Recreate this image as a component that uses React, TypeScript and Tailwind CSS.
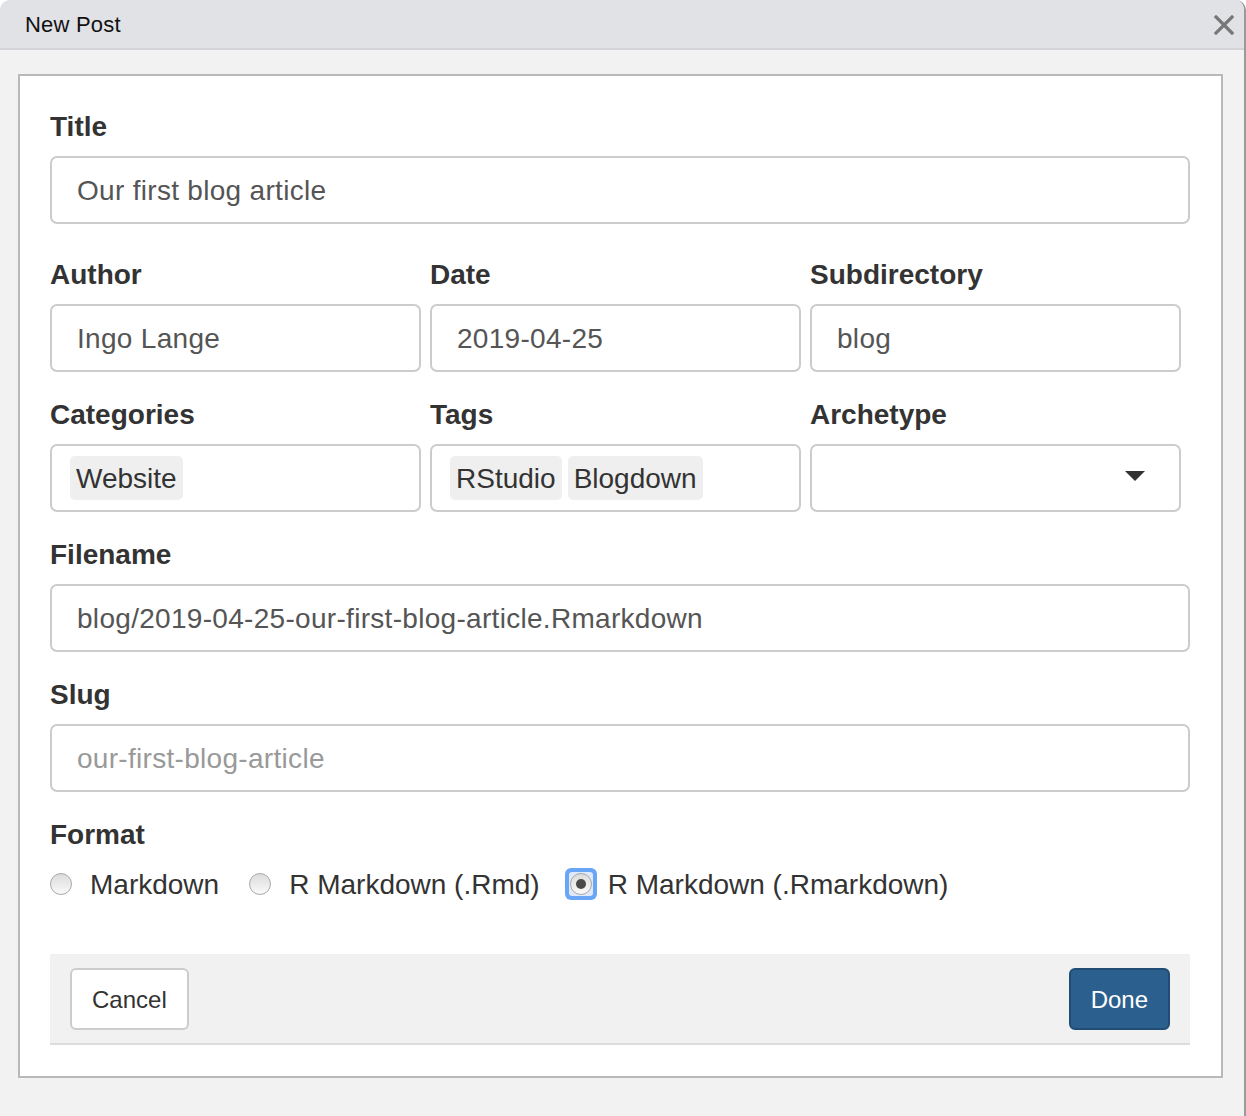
import { ReactNode } from "react";

const font = { fontFamily: '"Liberation Sans", Arial, Helvetica, sans-serif' };

function Label({ children, className = "" }: { children: ReactNode; className?: string }) {
  return (
    <div className={`h-10 leading-[42px] text-[28px] font-bold text-[#333] mb-[10px] ${className}`}>
      {children}
    </div>
  );
}

function TextBox({ value, muted, className = "" }: { value?: string; muted?: boolean; className?: string }) {
  return (
    <div
      className={`h-[68px] flex items-center pt-[2px] px-[25px] border-2 border-[#cccccc] rounded-[7px] bg-white text-[28px] tracking-[0.3px] ${
        muted ? "text-[#999]" : "text-[#555]"
      } ${className}`}
    >
      {value}
    </div>
  );
}

function Chips({ items }: { items: string[] }) {
  return (
    <div className="h-[68px] flex items-center gap-[6px] pl-[18px] border-2 border-[#cccccc] rounded-[7px] bg-white">
      {items.map((t) => (
        <span key={t} className="h-[44px] flex items-center pt-[2px] px-[6px] bg-[#efefef] rounded-[5px] text-[28px] text-[#333]">
          {t}
        </span>
      ))}
    </div>
  );
}

function Radio({ label, checked }: { label: string; checked?: boolean }) {
  const circle = (
    <span className="w-[22px] h-[22px] rounded-full border border-[#a8a8a8] bg-gradient-to-b from-[#dcdcdc] to-[#fafafa] flex items-center justify-center">
      {checked && <span className="w-[10px] h-[10px] rounded-full bg-[#4a4a4a]" />}
    </span>
  );
  return (
    <div className="flex items-center">
      {checked ? (
        <span className="w-[32px] h-[32px] -ml-[5px] mr-[11px] rounded-[6px] bg-[#6aa6f8] flex items-center justify-center">
          <span className="w-[24px] h-[24px] rounded-[3px] bg-[#dfe9f7] flex items-center justify-center">{circle}</span>
        </span>
      ) : (
        <span className="mr-[18px]">{circle}</span>
      )}
      <span className="text-[28px] text-[#333] pt-[2px]">{label}</span>
    </div>
  );
}

export default function App() {
  return (
    <div className="w-[1246px] h-[1116px] bg-white" style={font}>
      <div className="w-[1246px] h-[1116px] rounded-tl-[10px] rounded-tr-[10px] border-r-2 border-[#9a9a9a] bg-[#f1f2f1] overflow-hidden flex flex-col">
        <div className="h-[50px] shrink-0 bg-[#e1e2e6] border-b-2 border-[#d3d4d8] flex items-center justify-between pl-[25px] pr-[10px]">
          <span className="text-[22px] text-[#111] tracking-[0.2px]">New Post</span>
          <svg width="20" height="20" viewBox="0 0 20 20" className="mt-[1px]">
            <path d="M2 2 L18 18 M18 2 L2 18" stroke="#777" strokeWidth="3.2" strokeLinecap="square" />
          </svg>
        </div>
        <div className="pt-[24px] pl-[18px] pr-[21px]">
          <div className="h-[1004px] border-2 border-[#b9b9b9] bg-white pt-[30px] px-[30px]">
            <Label>Title</Label>
            <TextBox value="Our first blog article" className="w-[1140px]" />

            <div className="grid grid-cols-[371px_371px_371px] gap-x-[9px] mt-[30px]">
              <div>
                <Label>Author</Label>
                <TextBox value="Ingo Lange" />
              </div>
              <div>
                <Label>Date</Label>
                <TextBox value="2019-04-25" />
              </div>
              <div>
                <Label>Subdirectory</Label>
                <TextBox value="blog" />
              </div>
            </div>

            <div className="grid grid-cols-[371px_371px_371px] gap-x-[9px] mt-[22px]">
              <div>
                <Label>Categories</Label>
                <Chips items={["Website"]} />
              </div>
              <div>
                <Label>Tags</Label>
                <Chips items={["RStudio", "Blogdown"]} />
              </div>
              <div>
                <Label>Archetype</Label>
                <div className="h-[68px] flex items-center justify-end pr-[34px] border-2 border-[#cccccc] rounded-[7px] bg-white">
                  <svg width="20" height="11" viewBox="0 0 20 11" className="-mt-[4px]">
                    <path d="M0 0 H20 L10 10 Z" fill="#333" />
                  </svg>
                </div>
              </div>
            </div>

            <Label className="mt-[22px]">Filename</Label>
            <TextBox value="blog/2019-04-25-our-first-blog-article.Rmarkdown" className="w-[1140px]" />

            <Label className="mt-[22px]">Slug</Label>
            <TextBox value="our-first-blog-article" muted className="w-[1140px]" />

            <Label className="mt-[22px]">Format</Label>
            <div className="h-[40px] flex items-center gap-[30px]">
              <Radio label="Markdown" />
              <Radio label="R Markdown (.Rmd)" />
              <Radio label="R Markdown (.Rmarkdown)" checked />
            </div>

            <div className="mt-[50px] w-[1140px] h-[91px] bg-[#f1f1f1] border-b-2 border-[#dddddd] flex items-start justify-between px-[20px] pt-[14px]">
              <button className="h-[62px] px-[20px] pt-[1px] bg-white border-2 border-[#cccccc] rounded-[6px] text-[24px] text-[#333]">
                Cancel
              </button>
              <button className="h-[62px] px-[20px] pt-[1px] bg-[#2b5f8e] border-2 border-[#214d74] rounded-[6px] text-[24px] text-white">
                Done
              </button>
            </div>
          </div>
        </div>
      </div>
    </div>
  );
}
